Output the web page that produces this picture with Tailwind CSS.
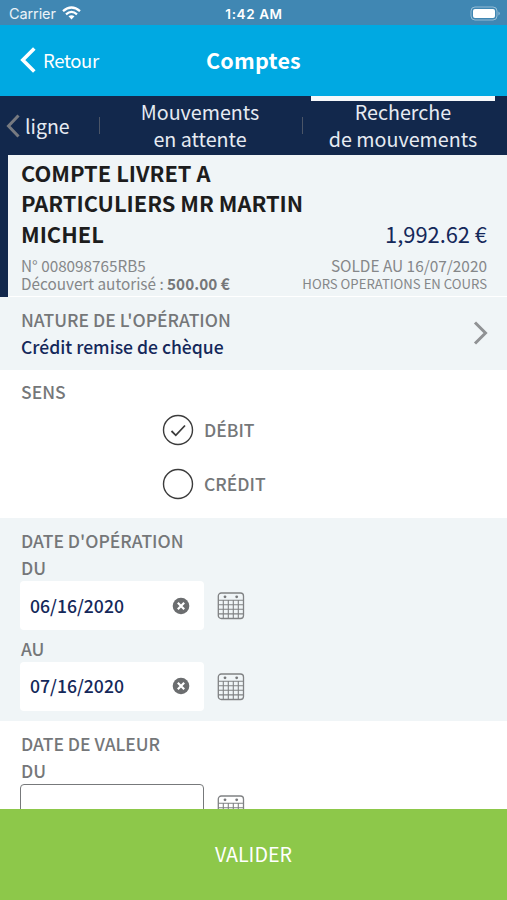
<!DOCTYPE html>
<html lang="fr">
<head>
<meta charset="utf-8">
<title>Comptes</title>
<script src="https://cdn.jsdelivr.net/npm/@tailwindcss/browser@4"></script>
</head>
<body class="w-[507px] h-[900px] overflow-hidden bg-white font-['Noto_Sans_CJK_SC','Noto_Sans',sans-serif] text-[#757779]">
<svg class="hidden">
  <symbol id="calendar" viewBox="0 0 28 28">
    <g fill="none" stroke="#808284" stroke-width="1.1">
      <rect x="1.300" y="1" width="25.200" height="25.500" rx="3" stroke-width="1.300"/>
      <path d="M1 8.200H26.500M1 12.700H26.500M1 17.300H26.500M1 21.900H26.500M6.300 8.200V26.500M11.300 8.200V26.500M16.300 8.200V26.500M21.300 8.200V26.500"/>
    </g>
    <circle cx="8" cy="4.800" r="1.400" fill="#77797b"/><circle cx="19.700" cy="4.800" r="1.400" fill="#77797b"/>
  </symbol>
  <symbol id="clear" viewBox="0 0 18 18">
    <circle cx="9" cy="9" r="8.300" fill="#6b6d6f"/>
    <path d="M5.800 5.800L12.200 12.200M12.200 5.800L5.800 12.200" stroke="#fff" stroke-width="2.200"/>
  </symbol>
</svg>
<div class="flex flex-col h-[900px]">
  <div class="h-[25px] shrink-0 bg-[#4087b3] text-white grid grid-cols-3 items-center pl-[9px] pr-[6px] pt-[2px] font-['Inter','Liberation_Sans',sans-serif] text-[14px] leading-[20px]">
    <div class="flex items-center gap-[6px]"><span class="text-[14.5px] text-white/90 tracking-[-0.1px]">Carrier</span>
      <svg class="w-[19px] h-[14px] -mt-px" viewBox="0 0 19 14" fill="none" stroke="#fff" stroke-width="2.300"><path d="M1 5.200Q9.500-2.200 18 5.200M4 8.300Q9.500 3.500 15 8.300"/><path d="M6.500 10.300Q9.500 8 12.500 10.300L9.500 13.500Z" fill="#fff" stroke="none"/></svg>
    </div>
    <div class="text-center font-semibold text-[13.500px] tracking-[0.6px] -ml-[2px]">1:42 AM</div>
    <svg class="w-[31px] h-[15px] justify-self-end" viewBox="0 0 31 15"><rect x="1" y="1" width="26" height="13" rx="4" fill="none" stroke="#fff" stroke-opacity=".45"/><rect x="3" y="3" width="22" height="9" rx="2" fill="#fff"/><path d="M28.500 5.500Q31 7.500 28.500 9.500Z" fill="#fff" fill-opacity=".5"/></svg>
  </div>
  <header class="h-[71px] shrink-0 bg-[#00a9e2] text-white grid grid-cols-3 items-center pl-[20px] pr-[20px] pb-[2px]">
    <div class="flex items-center gap-[7px]">
      <svg class="w-[16px] h-[26px]" viewBox="0 0 16 26" fill="none" stroke="#fff" stroke-width="3.600"><path d="M14.300 1.500L2.800 13L14.300 24.500"/></svg>
      <span class="text-[18.500px] leading-[28px] tracking-[-0.35px] pt-px">Retour</span>
    </div>
    <h1 class="text-center font-bold text-[21.500px] leading-[28px] tracking-[0.25px]">Comptes</h1>
  </header>
  <nav class="h-[59px] shrink-0 bg-[#12284c] text-[#e6ebf2] text-[19.700px] leading-[27px] flex">
    <div class="w-[99px] flex items-center pl-[6px] gap-[5px]">
      <svg class="w-[14px] h-[24px]" viewBox="0 0 14 24" fill="none" stroke="#777a80" stroke-width="3"><path d="M12.500 1.500L2.500 12L12.500 22.500"/></svg>
      <span class="text-[19.500px] pb-px">ligne</span>
    </div>
    <div class="w-px h-[17px] mt-[21px] bg-[#4b5567]"></div>
    <div class="w-[200px] mr-[2px] text-center pt-[2px]">Mouvements<br>en attente</div>
    <div class="w-px h-[17px] mt-[21px] bg-[#4b5567]"></div>
    <div class="ml-[8px] w-[184px] border-t-[5px] border-[#f6f9fb] text-center"><div class="-mt-[3px] whitespace-nowrap">Recherche<br>de mouvements</div></div>
  </nav>
  <section class="h-[142px] shrink-0 border-l-[8px] border-[#12284c] bg-[#f0f5f7] shadow-[inset_0_-1px_0_#fff] pl-[13px] pr-[20px] pt-[2px]">
    <div class="flex justify-between items-end h-[92px]">
      <h2 class="font-bold text-[21.850px] leading-[30.500px] text-[#1d1d1d] whitespace-nowrap">COMPTE LIVRET A<br>PARTICULIERS MR MARTIN<br>MICHEL</h2>
      <div class="text-[21.850px] leading-[31px] text-[#14285a]">1,992.62 €</div>
    </div>
    <div class="flex justify-between text-[15.300px] leading-[18px] pt-[7px] text-[#858789] whitespace-nowrap">
      <div><div>N° 008098765RB5</div><div>Découvert autorisé : <b class="text-[#757779]">500.00 €</b></div></div>
      <div class="text-right"><div class="text-[15.400px]">SOLDE AU 16/07/2020</div><div class="text-[13.150px] pt-px">HORS OPERATIONS EN COURS</div></div>
    </div>
  </section>
  <section class="h-[73px] shrink-0 bg-[#f0f5f7] flex justify-between pl-[21px] pr-[19px] pt-[9px]">
    <div class="leading-[27px] font-medium whitespace-nowrap">
      <div class="text-[17.500px]">NATURE DE L'OPÉRATION</div>
      <div class="text-[17.550px] text-[#14285a]">Crédit remise de chèque</div>
    </div>
    <svg class="w-[15px] h-[24px] mt-[15px]" viewBox="0 0 15 24" fill="none" stroke="#909294" stroke-width="3"><path d="M2 1.500L12.500 12L2 22.500"/></svg>
  </section>
  <section class="h-[148px] shrink-0 bg-white pl-[21px] pt-[8px] font-medium text-[17.500px] leading-[27px]">
    <div>SENS</div>
    <div class="pl-[141px] pt-[9px] flex flex-col gap-[22px]">
      <div class="flex items-center gap-[10px] h-[32px]"><svg class="w-[32px] h-[32px]" viewBox="0 0 32 32" fill="none" stroke="#3c3c3c" stroke-width="1.400"><circle cx="16" cy="16" r="14.500"/><path d="M9.500 17L13.800 21.300L23 11.500" stroke-width="1.800"/></svg><span class="pb-[2px]">DÉBIT</span></div>
      <div class="flex items-center gap-[10px] h-[32px]"><svg class="w-[32px] h-[32px]" viewBox="0 0 32 32" fill="none" stroke="#3c3c3c" stroke-width="1.400"><circle cx="16" cy="16" r="14.500"/></svg><span class="pb-[2px]">CRÉDIT</span></div>
    </div>
  </section>
  <section class="h-[203px] shrink-0 bg-[#f0f5f7] pl-[20px] pt-[9px] font-medium text-[17.500px] leading-[27px]">
    <div class="pl-px">DATE D'OPÉRATION</div>
    <div class="pl-px">DU</div>
    <div class="flex items-center gap-[13px]">
      <div class="w-[184px] h-[49px] bg-white rounded-[4px] flex items-center justify-between pl-[10px] pr-[14px] text-[17.600px] text-[#14285a]"><span class="pb-px">06/16/2020</span><svg class="w-[18px] h-[18px]"><use href="#clear"/></svg></div>
      <svg class="w-[28px] h-[28px]"><use href="#calendar"/></svg>
    </div>
    <div class="pl-px pt-[5px]">AU</div>
    <div class="flex items-center gap-[13px]">
      <div class="w-[184px] h-[49px] bg-white rounded-[4px] flex items-center justify-between pl-[10px] pr-[14px] text-[17.600px] text-[#14285a]"><span class="pb-[2px]">07/16/2020</span><svg class="w-[18px] h-[18px] mb-px"><use href="#clear"/></svg></div>
      <svg class="w-[28px] h-[28px]"><use href="#calendar"/></svg>
    </div>
  </section>
  <section class="h-[88px] shrink-0 bg-white overflow-hidden pl-[20px] pt-[9px] font-medium text-[17.500px] leading-[27px]">
    <div class="pl-px">DATE DE VALEUR</div>
    <div class="pl-px">DU</div>
    <div class="flex items-center gap-[13px]">
      <div class="w-[184px] h-[49px] rounded-[4px] border border-[#77797b]"></div>
      <svg class="w-[28px] h-[28px]"><use href="#calendar"/></svg>
    </div>
  </section>
  <button class="h-[91px] shrink-0 bg-[#8dc84a] text-white text-[19.700px] leading-[28px] pb-[2px]">VALIDER</button>
</div>
</body>
</html>
